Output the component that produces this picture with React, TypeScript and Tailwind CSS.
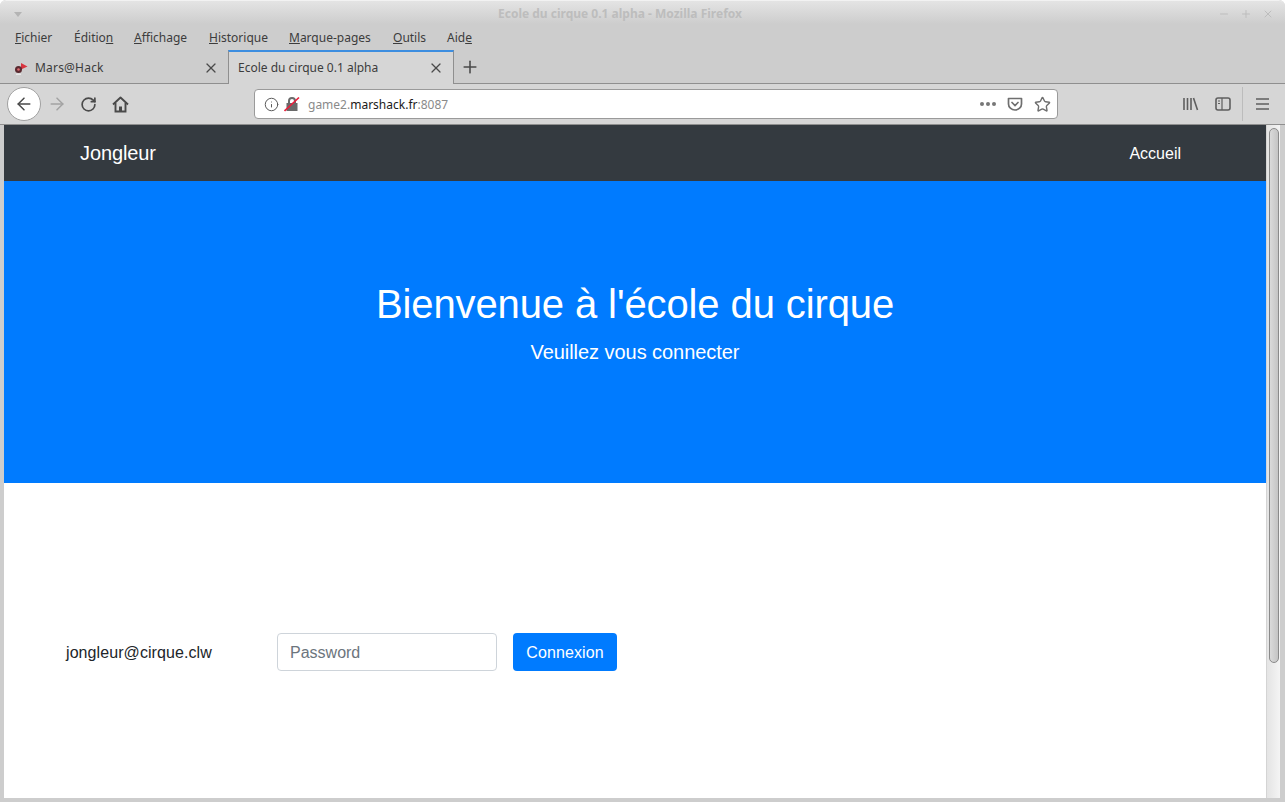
import { RotateCw, ArrowLeft, ArrowRight, X, Plus, Info, Star, Minus } from "lucide-react";

const MENU_ITEMS = [
  { before: "", key: "F", after: "ichier", width: "w-[59px]" },
  { before: "Éditio", key: "n", after: "", width: "w-[60px]" },
  { before: "", key: "A", after: "ffichage", width: "w-[75px]" },
  { before: "", key: "H", after: "istorique", width: "w-[80px]" },
  { before: "", key: "M", after: "arque-pages", width: "w-[104px]" },
  { before: "", key: "O", after: "utils", width: "w-[54px]" },
  { before: "Aid", key: "e", after: "", width: "w-[40px]" },
];

function TitleBar() {
  return (
    <div className="flex h-[24px] items-center justify-between rounded-t-md border-t border-[#f2f2f2] bg-gradient-to-b from-[#e4e4e4] to-[#cdcdcd] pl-[14px] pr-[11px] pt-[3px]">
      <span className="h-0 w-0 border-x-[4px] border-t-[5px] border-x-transparent border-t-[#b4b4b4]" />
      <span className="text-[12px] font-bold text-[#bdbdbd]">Ecole du cirque 0.1 alpha - Mozilla Firefox</span>
      <div className="flex items-center gap-[10px] text-[#bdbdbd]">
        <Minus size={12} strokeWidth={2} />
        <Plus size={12} strokeWidth={2} />
        <X size={12} strokeWidth={2} />
      </div>
    </div>
  );
}

function MenuBar() {
  return (
    <div className="flex h-[26px] items-center bg-[#cdcdcd] pl-[11px] pt-[2px] text-[12px] text-[#3c3c3c]">
      {MENU_ITEMS.map((item) => (
        <span key={item.key + item.after} className={`${item.width} shrink-0 whitespace-nowrap pl-[4px]`}>
          {item.before}
          <span className="underline">{item.key}</span>
          {item.after}
        </span>
      ))}
    </div>
  );
}

function TabBar() {
  return (
    <div className="flex h-[34px] items-stretch border-b border-[#8f8f8f] bg-[#cdcdcd]">
      <div className="flex w-[228px] items-center justify-between pl-[14px] pr-[9px] pt-[2px] text-[12px] text-[#3c3c3c]">
        <span className="flex items-center gap-[7px]">
          <svg width="14" height="14" viewBox="0 0 14 14">
            <path d="M7 2l6.5 3.5L7 8.5z" fill="#d8343f" />
            <circle cx="4.5" cy="8.5" r="3.5" fill="#5a2a30" />
            <circle cx="4.5" cy="8.5" r="1.3" fill="#e06a70" />
            <path d="M2 13.2h5" stroke="#f2f2f2" strokeWidth="1" />
          </svg>
          <span className="tracking-[0.2px]">Mars@Hack</span>
        </span>
        <X size={16} strokeWidth={1.8} className="text-[#4a4a4a]" />
      </div>
      <div className="-mb-px flex w-[226px] items-center justify-between border-x border-[#8f8f8f] border-t-[2px] border-t-[#3d8ee0] bg-[#d6d6d6] pl-[9px] pr-[9px] text-[12px] text-[#3c3c3c]">
        Ecole du cirque 0.1 alpha
        <X size={16} strokeWidth={1.8} className="text-[#4a4a4a]" />
      </div>
      <div className="flex w-[32px] items-center justify-center text-[#4a4a4a]">
        <Plus size={20} strokeWidth={1.9} />
      </div>
    </div>
  );
}

function UrlBar() {
  return (
    <div className="flex h-[30px] w-[804px] items-center rounded-[4px] border border-[#9a9a9a] bg-white pl-[9px] pr-[6px] text-[12px]">
      <Info size={15} strokeWidth={1.6} className="text-[#5a5a5a]" />
      <svg width="16" height="16" viewBox="0 0 16 16" className="ml-[5px]">
        <path d="M4 7V5a4 4 0 018 0v2h1.5v8H2.5V7zM6 7h4V5a2 2 0 00-4 0z" fill="#6a6a6a" fillRule="evenodd" />
        <path d="M0.5 15L15 1.5" stroke="#e8203c" strokeWidth="1.7" />
      </svg>
      <span className="ml-[8px] pt-[2px] text-[#8a8a8a]">
        game2.<span className="text-[#1a1a1a]">marshack.fr</span>:8087
      </span>
      <div className="ml-auto flex items-center text-[#6a6a6a]">
        <span className="flex gap-[2px]">
          <span className="h-[4px] w-[4px] rounded-full bg-[#777]" />
          <span className="h-[4px] w-[4px] rounded-full bg-[#777]" />
          <span className="h-[4px] w-[4px] rounded-full bg-[#777]" />
        </span>
        <svg width="16" height="16" viewBox="0 0 16 16" fill="none" stroke="#6f6f6f" strokeWidth="1.7" className="ml-[11px]">
          <path d="M1.5 2.5h13v5.5a6.5 6 0 01-13 0z" strokeLinejoin="round" />
          <path d="M5 6.5l3 3 3-3" strokeLinecap="round" />
        </svg>
        <Star size={17} strokeWidth={2} className="ml-[11px] text-[#6f6f6f]" />
      </div>
    </div>
  );
}

function NavToolbar() {
  return (
    <div className="flex h-[40px] items-center bg-[#d6d6d6] pl-[7px] pr-[16px]">
      <span className="flex h-[34px] w-[34px] items-center justify-center rounded-full border border-[#a0a0a0] bg-white text-[#4a4a4a]">
        <ArrowLeft size={20} strokeWidth={1.8} />
      </span>
      <ArrowRight size={20} strokeWidth={1.8} className="ml-[6px] text-[#a3a3a3]" />
      <RotateCw size={17} strokeWidth={2.4} className="ml-[13px] text-[#4a4a4a]" />
      <svg width="17" height="17" viewBox="0 0 17 17" className="ml-[15px]" fill="none" stroke="#4a4a4a" strokeWidth="1.9">
        <path d="M1 8.5L8.5 1.5 16 8.5" strokeLinejoin="round" />
        <path d="M3.5 7v8.5h10V7" />
        <path d="M7 15.5v-5h3v5" fill="#4a4a4a" stroke="none" />
      </svg>
      <div className="ml-[125px]">
        <UrlBar />
      </div>
      <div className="ml-auto flex items-center text-[#5f5f5f]">
        <svg width="16" height="14" viewBox="0 0 16 14" fill="none" stroke="#5f5f5f" strokeWidth="1.6">
          <path d="M1 1v12M4.5 1v12M8 1v12M10.5 1l4 12" />
        </svg>
        <svg width="16" height="14" viewBox="0 0 16 14" fill="none" stroke="#5f5f5f" strokeWidth="1.6" className="ml-[16px]">
          <rect x="1" y="1" width="14" height="12" rx="2" />
          <path d="M7 1v12M3 4h2M3 6.5h2" strokeWidth="1.2" />
        </svg>
        <span className="ml-[11px] h-[34px] w-px bg-[#bcbcbc]" />
        <svg width="13" height="12" viewBox="0 0 13 12" stroke="#5f5f5f" strokeWidth="1.7" className="ml-[13px]">
          <path d="M0 1h13M0 6h13M0 11h13" />
        </svg>
      </div>
    </div>
  );
}

function Page() {
  return (
    <div className="flex min-w-0 flex-1 flex-col overflow-hidden bg-white font-['Liberation_Sans',sans-serif] text-[16px] text-[#212529]">
      <nav className="flex h-[56px] shrink-0 items-center justify-between bg-[#343a40] pl-[76px] pr-[85px] text-white">
        <span className="text-[20px] tracking-[-0.1px]">Jongleur</span>
        <span className="pt-[2px]">Accueil</span>
      </nav>
      <section className="flex h-[302px] shrink-0 flex-col items-center bg-[#007bff] pt-[99px] text-white">
        <h1 className="text-[40px] leading-[48px] tracking-[-0.11px]">Bienvenue à l'école du cirque</h1>
        <p className="mt-[9px] text-[20px] leading-[30px] tracking-[-0.05px]">Veuillez vous connecter</p>
      </section>
      <form className="flex items-center pl-[62px] pt-[150px]">
        <span className="w-[211px] pt-[2px] tracking-[0.08px]">jongleur@cirque.clw</span>
        <input
          placeholder="Password"
          className="h-[38px] w-[220px] rounded-[4px] border border-[#ced4da] bg-white px-[12px] pt-[2px] text-[16px] placeholder:text-[#6c757d]"
        />
        <button type="button" className="ml-[16px] h-[38px] w-[104px] rounded-[4px] bg-[#007bff] pt-[2px] tracking-[0.1px] text-white">
          Connexion
        </button>
      </form>
    </div>
  );
}

function Scrollbar() {
  return (
    <div className="w-[14px] shrink-0 border-l border-[#d4d4d4] bg-gradient-to-r from-[#e4e4e4] to-[#f4f4f4] px-[2px] pt-[3px]">
      <div className="h-[535px] w-[10px] rounded-[5px] border border-[#8a8a8a] bg-gradient-to-r from-[#dadada] to-[#c4c4c4]" />
    </div>
  );
}

export default function App() {
  return (
    <div className="flex h-[802px] w-[1285px] flex-col overflow-hidden rounded-t-md bg-[#cdcdcd] pb-[4px] font-['Noto_Sans',sans-serif]">
      <TitleBar />
      <MenuBar />
      <TabBar />
      <NavToolbar />
      <div className="flex min-h-0 flex-1 border-t border-[#8f8f8f] pl-[4px] pr-[5px]">
        <Page />
        <Scrollbar />
      </div>
    </div>
  );
}
